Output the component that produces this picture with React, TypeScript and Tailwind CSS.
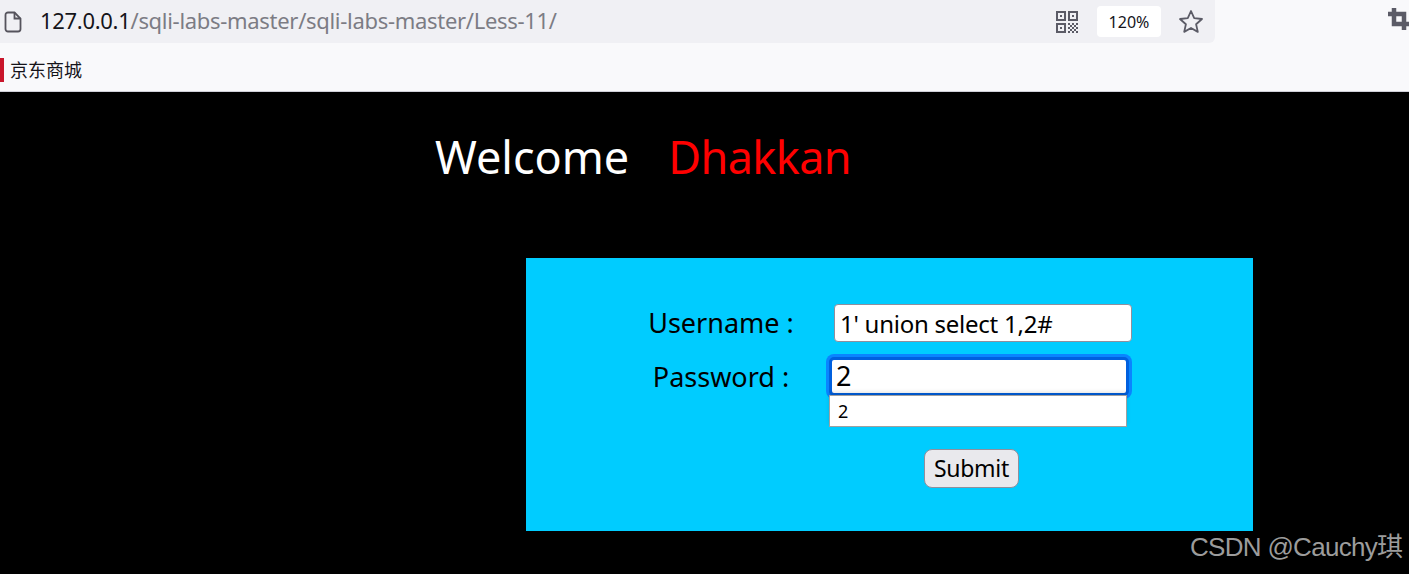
const uiFont = "font-['Noto_Sans','Noto_Sans_CJK_SC',sans-serif]";

function PageIcon() {
  return (
    <svg width="18" height="22" viewBox="0 0 18 22" fill="none" stroke="#55535c" strokeWidth="1.8">
      <path d="M4 1.5h6.5L16.5 7.5v10.5a2.5 2.5 0 0 1-2.5 2.5H4A2.5 2.5 0 0 1 1.5 18V4A2.5 2.5 0 0 1 4 1.5z" />
      <path d="M10.5 1.5v6h6" />
    </svg>
  );
}

function QrIcon() {
  return (
    <svg width="22" height="22" viewBox="0 0 22 22" fill="#5b5b66">
      <path fillRule="evenodd" d="M0 0h10v10H0zM2 2v6h6V2zM12 0h10v10H12zM14 2v6h6V2zM0 12h10v10H0zM2 14v6h6v-6z" />
      <rect x="4" y="4" width="2" height="2" />
      <rect x="16" y="4" width="2" height="2" />
      <rect x="4" y="16" width="2" height="2" />
      <path d="M12 12h2v2h-2zM16 12h2v2h-2zM20 12h2v2h-2zM14 14h2v2h-2zM18 14h2v2h-2zM12 16h2v2h-2zM16 16h2v2h-2zM20 16h2v2h-2zM14 18h2v2h-2zM18 18h2v2h-2zM12 20h2v2h-2zM16 20h2v2h-2zM20 20h2v2h-2z" />
    </svg>
  );
}

function StarIcon() {
  return (
    <svg width="26" height="25" viewBox="0 0 26 25" fill="none" stroke="#5b5b66" strokeWidth="1.8" strokeLinejoin="round">
      <path d="M13 2l3.2 7.2 7.8.8-5.9 5.2 1.7 7.7L13 19l-6.8 3.9 1.7-7.7L2 10l7.8-.8z" />
    </svg>
  );
}

function CropIcon() {
  return (
    <svg width="22" height="22" viewBox="0 0 22 22" fill="none" stroke="#5b5b66" strokeWidth="4.5">
      <path d="M0 6h16v16" />
      <path d="M6 0v16h16" />
    </svg>
  );
}

export default function App() {
  return (
    <div className={`flex h-[574px] w-[1409px] flex-col overflow-hidden bg-black ${uiFont}`}>
      {/* browser toolbar */}
      <div className="h-[92px] shrink-0 border-b border-[#cfcfd8] bg-[#f9f9fb]">
        <div className="flex h-[43px] items-center">
          <div className="flex h-[43px] w-[1215px] items-center rounded-br-md bg-[#f0f0f4] pl-[4px] pr-[11px]">
            <PageIcon />
            <div className="ml-[18px] whitespace-nowrap pb-[2px] text-[22px] tracking-[-0.3px] text-[#7c7c84]">
              <span className="text-[#15141a]">127.0.0.1</span>/sqli-labs-master/sqli-labs-master/Less-11/
            </div>
            <div className="ml-auto flex items-center">
              <QrIcon />
              <div className="ml-[19px] flex h-[31px] w-[64px] items-center justify-center rounded bg-white text-[16px] text-[#15141a]">
                120%
              </div>
              <div className="ml-[17px]">
                <StarIcon />
              </div>
            </div>
          </div>
          <div className="ml-auto mb-[5px] w-[21px] overflow-hidden">
            <CropIcon />
          </div>
        </div>
        <div className="flex h-[48px] items-center pt-[6px]">
          <div className="h-[24px] w-[4px] bg-[#c9162b]" />
          <span className="ml-[6px] text-[18px] leading-none text-[#15141a]">京东商城</span>
        </div>
      </div>

      {/* page */}
      <div className="relative flex-1 text-black">
        <div className="ml-[435px] mt-[35px] flex h-[58px] items-center text-[45px] leading-none">
          <span className="text-white">Welcome</span>
          <span className="ml-[39px] tracking-[-0.6px] text-[#ff0000]">Dhakkan</span>
        </div>

        <div className="ml-[526px] mt-[73px] h-[273px] w-[727px] bg-[#00ccff] pl-[85px] pt-[46px]">
          <div className="flex h-[38px] items-center">
            <label className="w-[220px] pb-[2px] text-center text-[27px] leading-none">Username :</label>
            <input
              readOnly
              value="1' union select 1,2#"
              className="ml-[3px] h-[38px] w-[298px] rounded border border-[#8f8f9d] bg-white px-[5px] text-[24px] tracking-[-0.25px] text-black outline-none"
            />
          </div>
          <div className="mt-[16px] flex h-[38px] items-center">
            <label className="w-[220px] pb-[2px] text-center text-[27px] leading-none">Password :</label>
            <div className="relative -ml-[2px] -mt-[1px] h-[39px]">
              <input
                readOnly
                value="2"
                className="h-[39px] w-[300px] rounded-[5px] border-[3px] border-[#0060df] bg-white px-[4px] text-[27px] text-black shadow-[0_0_0_3px_#0a84ff] outline-none"
              />
              <div className="absolute left-0 top-[38px] flex h-[32px] w-[298px] items-center border border-[#a0a0a0] bg-white pl-[8px] text-[18px] leading-none shadow-[0_-3px_4px_rgba(0,0,0,0.12)]">
                2
              </div>
            </div>
          </div>
          <div className="mt-[53px] pl-[313px]">
            <button className="h-[39px] w-[95px] rounded-[8px] border border-[#8f8f9d] bg-[#e9e9ed] text-[23px] leading-none tracking-[-0.3px] text-black">
              Submit
            </button>
          </div>
        </div>

        <span className="absolute left-[1190px] top-[442px] whitespace-nowrap font-['Liberation_Sans','Noto_Sans_CJK_SC',sans-serif] text-[26px] leading-none tracking-[-0.7px] text-[#9c9c9c]">
          CSDN @Cauchy琪
        </span>
      </div>
    </div>
  );
}
